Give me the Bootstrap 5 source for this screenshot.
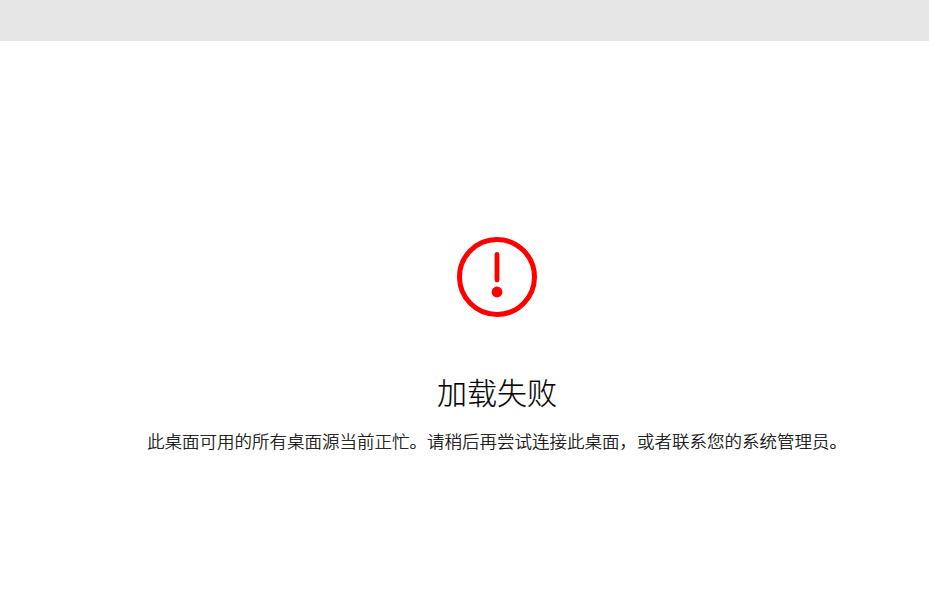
<!DOCTYPE html>
<html lang="zh-CN">
<head>
    <meta charset="UTF-8">
    <meta name="viewport" content="width=device-width, initial-scale=1.0">
    <title>加载失败</title>
    <link rel="stylesheet" href="https://cdn.jsdelivr.net/npm/bootstrap@5.3.3/dist/css/bootstrap.min.css">
    <style>
        body {
            font-family: "Liberation Sans", "Noto Sans CJK SC", sans-serif;
            color: #000;
            background: #fff;
            overflow: hidden;
        }
        .top-strip {
            height: 41px;
            background: #e6e6e6;
        }
        .load-error {
            padding-top: 196px;
            padding-left: 65px;
        }
        .error-icon {
            width: 80px;
            height: 80px;
            margin-bottom: 55px;
        }
        .error-title {
            font-size: 30px;
            line-height: 44px;
            font-weight: 300;
            margin-bottom: 13px;
            -webkit-text-stroke: 0.15px #000;
        }
        .error-text {
            font-size: 17.5px;
            line-height: 26px;
            font-weight: 300;
            white-space: nowrap;
            -webkit-text-stroke: 0.2px #000;
        }
    </style>
</head>
<body>
    <div class="top-strip"></div>

    <div class="load-error d-flex flex-column align-items-center text-center">
        <svg class="error-icon" viewBox="0 0 80 80" fill="none">
            <circle cx="40" cy="40" r="37.5" stroke="#f00" stroke-width="5"/>
            <line x1="40" y1="17.5" x2="40" y2="43" stroke="#f00" stroke-width="4.8" stroke-linecap="round"/>
            <circle cx="40" cy="55" r="5.4" fill="#f00"/>
        </svg>
        <h1 class="error-title">加载失败</h1>
        <p class="error-text mb-0">此桌面可用的所有桌面源当前正忙。请稍后再尝试连接此桌面&#xFF0C;或者联系您的系统管理员。</p>
    </div>

    <script src="https://cdn.jsdelivr.net/npm/bootstrap@5.3.3/dist/js/bootstrap.bundle.min.js"></script>
</body>
</html>
